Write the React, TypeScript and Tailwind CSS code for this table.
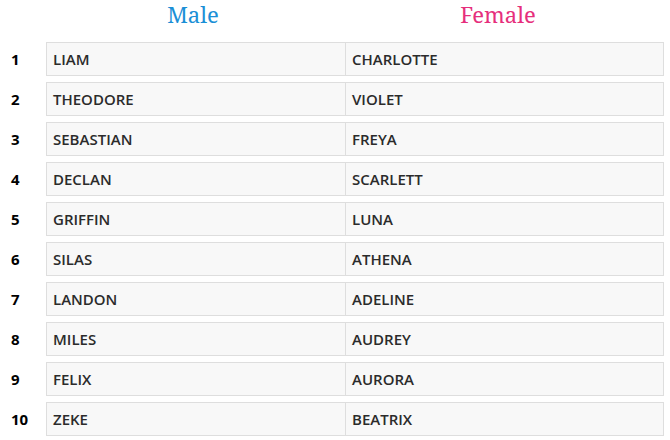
import React from "react";

const names: [string, string][] = [
  ["LIAM", "CHARLOTTE"],
  ["THEODORE", "VIOLET"],
  ["SEBASTIAN", "FREYA"],
  ["DECLAN", "SCARLETT"],
  ["GRIFFIN", "LUNA"],
  ["SILAS", "ATHENA"],
  ["LANDON", "ADELINE"],
  ["MILES", "AUDREY"],
  ["FELIX", "AURORA"],
  ["ZEKE", "BEATRIX"],
];

const App = () => {
  return (
    <div className="w-[670px] h-[440px] bg-white font-['Open_Sans',sans-serif] text-[#333]">
      {/* header cells sit a little left of the table columns */}
      <div className="flex h-[42px] pl-[40px] font-['Noto_Serif','DejaVu_Serif',serif] text-[22px] leading-[28px]">
        <div className="w-[306px] text-center text-[#1b8fd6]">Male</div>
        <div className="w-[304px] text-center text-[#e62f7c]">Female</div>
      </div>
      <div className="flex flex-col gap-[6px]">
        {names.map((pair, i) => (
          <div key={pair[0]} className="flex items-center">
            <div className="w-[46px] pl-[11px] text-[15px] font-bold text-black">{i + 1}</div>
            <div className="flex w-[618px] h-[34px] border border-[#dedede] bg-[#f8f8f8] text-[15px] font-semibold text-[#2b2b2b]">
              <div className="w-[299px] flex items-center px-[6px] border-r border-[#dedede]">{pair[0]}</div>
              <div className="flex-1 flex items-center px-[6px]">{pair[1]}</div>
            </div>
          </div>
        ))}
      </div>
    </div>
  );
};

export default App;
